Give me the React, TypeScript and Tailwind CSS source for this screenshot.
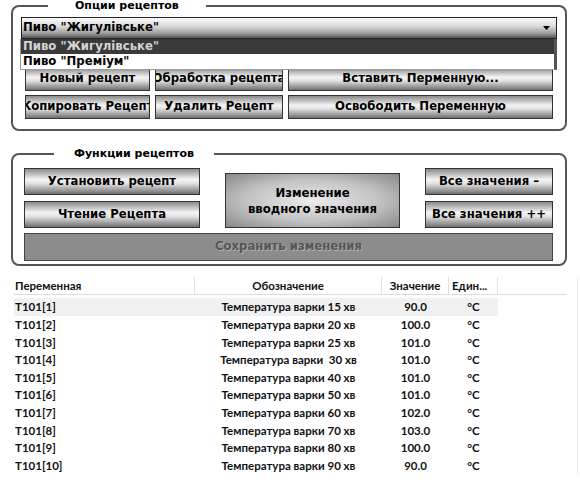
import React from "react";

const base =
  "flex items-center justify-center overflow-hidden whitespace-nowrap border border-[#333] text-[11.7px] font-bold text-black";
const grad = "bg-[linear-gradient(to_bottom,#8a8a8a_0%,#f4f4f4_42%,#e2e2e2_58%,#707070_100%)]";
const btn = `${base} ${grad} leading-none`;

const rows: [string, string, string][] = [
  ["T101[1]", "Температура варки 15 хв", "90.0"],
  ["T101[2]", "Температура варки 20 хв", "100.0"],
  ["T101[3]", "Температура варки 25 хв", "101.0"],
  ["T101[4]", "Температура варки  30 хв", "101.0"],
  ["T101[5]", "Температура варки 40 хв", "101.0"],
  ["T101[6]", "Температура варки 50 хв", "101.0"],
  ["T101[7]", "Температура варки 60 хв", "102.0"],
  ["T101[8]", "Температура варки 70 хв", "103.0"],
  ["T101[9]", "Температура варки 80 хв", "100.0"],
  ["T101[10]", "Температура варки 90 хв", "90.0"],
];

export default function App() {
  return (
    <div className="h-[480px] w-[580px] overflow-hidden bg-white font-['DejaVu_Sans',sans-serif] text-black">
      {/* Group 1 */}
      <fieldset className="ml-[11px] w-[556px] rounded-[8px] border-2 border-[#555] px-[8px] pb-[10px] pt-[5px]">
        <legend className="ml-[27px] px-[27px] text-[11px] font-bold leading-[12px]">Опции рецептов</legend>
        <div className="relative">
          <div className="flex h-[22px] items-center justify-between border border-[#222] bg-[linear-gradient(to_bottom,#fafafa_0%,#dcdcdc_40%,#a0a0a0_75%,#585858_100%)] pl-[1px] pr-[6px] text-[11.7px] font-bold">
            <span>Пиво "Жигулівське"</span>
            <svg width="7" height="4" viewBox="0 0 7 4">
              <path d="M0 0 H7 L3.5 4 Z" fill="#000" />
            </svg>
          </div>
          <div className="absolute left-[-1px] right-0 top-[22px] z-10 border-b border-l border-r-[3px] border-[#9a9a9a] border-r-[#555] bg-white text-[11.7px] font-bold leading-none">
            <div className="flex h-[15px] items-center bg-[#3a3a3a] pl-[2px] text-[#d4d4d4]">Пиво "Жигулівське"</div>
            <div className="flex h-[15px] items-center pl-[2px]">Пиво "Преміум"</div>
          </div>
          <div className="mt-[28px] flex flex-col gap-[4px] px-[4px]">
            <div className="flex h-[24px] gap-[5px]">
              <div className={`${btn} w-[125px]`}>Новый рецепт</div>
              <div className={`${btn} w-[128px]`}>Обработка рецепта</div>
              <div className={`${btn} flex-1`}>Вставить Перменную...</div>
            </div>
            <div className="flex h-[24px] gap-[5px]">
              <div className={`${btn} w-[125px]`}>Копировать Рецепт</div>
              <div className={`${btn} w-[128px]`}>Удалить Рецепт</div>
              <div className={`${btn} flex-1`}>Освободить Переменную</div>
            </div>
          </div>
        </div>
      </fieldset>

      {/* Group 2 */}
      <fieldset className="ml-[11px] mt-[17px] w-[556px] rounded-[8px] border-2 border-[#555] px-[11px] pb-[3px] pt-[8px]">
        <legend className="ml-[30px] px-[20px] text-[11px] font-bold leading-[12px]">Функции рецептов</legend>
        <div className="grid grid-cols-[176px_175px_128px] grid-rows-[27px_27px_27px] gap-x-[25px] gap-y-[6px]">
          <div className={btn}>Установить рецепт</div>
          <div className={`${base} row-span-2 mt-[5px] flex-col bg-[radial-gradient(ellipse_at_center,#ececec_0%,#c2c2c2_55%,#888888_100%)] leading-[16px]`}>
            <span>Изменение</span>
            <span>вводного значения</span>
          </div>
          <div className={btn}>Все значения –</div>
          <div className={btn}>Чтение Рецепта</div>
          <div className={btn}>Все значения ++</div>
          <div className="col-span-3 -mt-[1px] flex items-center justify-center border border-[#444] bg-[#8c8c8c] text-[11.7px] font-bold text-[#555] [text-shadow:1px_1px_0_#b0b0b0]">
            Сохранить изменения
          </div>
        </div>
      </fieldset>

      {/* Table */}
      <div className="ml-[14px] mt-[11px] w-[564px] border-r border-[#ececec] font-['Lato',sans-serif] text-[11.5px] font-bold text-[#111]">
        <div className="flex h-[18px] w-[553px] items-center border-b border-[#dcdcdc]">
          <div className="flex h-full w-[181px] items-center border-r border-[#e2e2e2] pl-[1px]">Переменная</div>
          <div className="flex h-full w-[187px] items-center justify-center border-r border-[#e2e2e2]">Обозначение</div>
          <div className="flex h-full w-[67px] items-center justify-center border-r border-[#e2e2e2]">Значение</div>
          <div className="flex h-full w-[49px] items-center border-r border-[#e2e2e2] pl-[3px]">Един...</div>
        </div>
        <div className="mt-[3px]">
          {rows.map((r, i) => (
            <div key={i} className={`flex h-[17.67px] w-[484px] items-center ${i === 0 ? "bg-[#f0f0f0]" : ""}`}>
              <div className="w-[181px] pl-[1px]">{r[0]}</div>
              <div className="w-[187px] whitespace-pre text-center">{r[1]}</div>
              <div className="w-[67px] text-center">{r[2]}</div>
              <div className="w-[49px] text-center">°C</div>
            </div>
          ))}
        </div>
      </div>
    </div>
  );
}
